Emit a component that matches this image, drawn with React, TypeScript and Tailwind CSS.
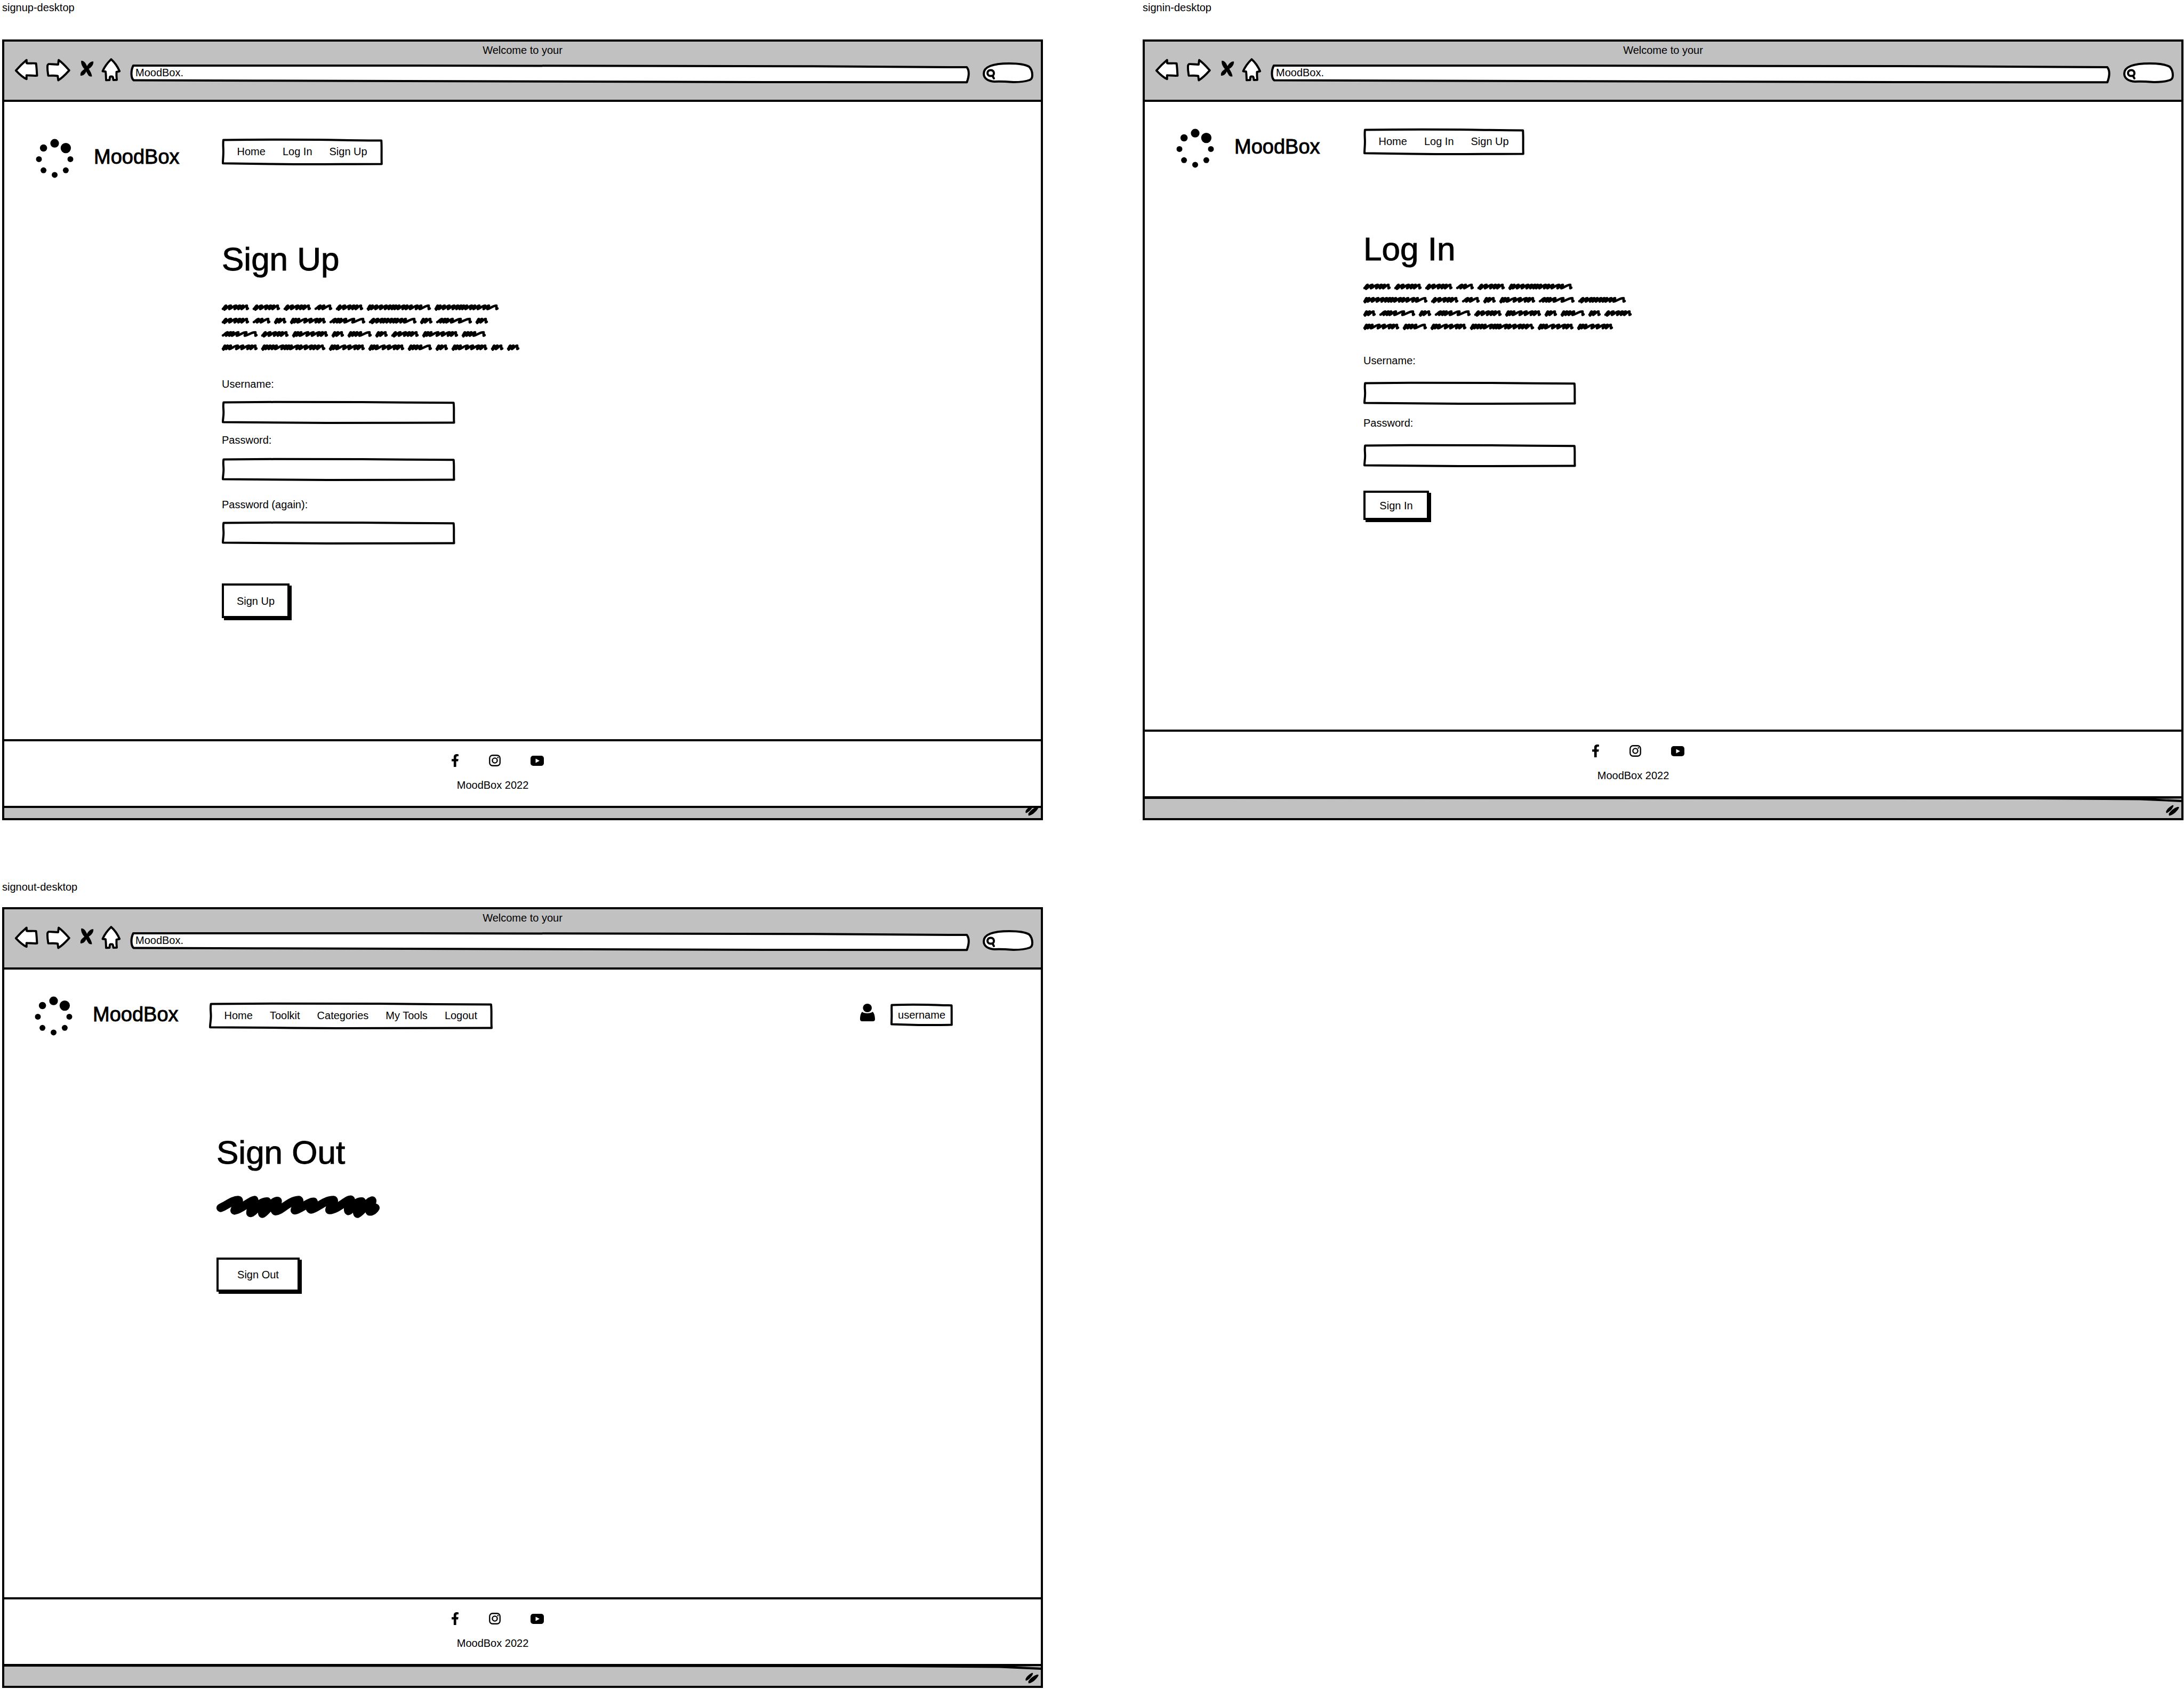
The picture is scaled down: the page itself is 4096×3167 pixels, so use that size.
import React from "react";
import { FaFacebookF } from "react-icons/fa";

/* ---------- Hand-drawn pieces ---------- */

function SketchFrame() {
  return (
    <svg
      aria-hidden="true"
      viewBox="0 0 100 100"
      preserveAspectRatio="none"
      className="pointer-events-none absolute inset-0.5 -z-10 h-[calc(100%-4px)] w-[calc(100%-4px)] overflow-visible"
    >
      <path
        d="M0.3 1 C20 -1 45 -1 60 0 S85 3 99.7 3 C100 30 99.7 65 99.9 99 C80 99 60 101 45 100 S12 97 0 96 C0 80 0.3 70 0.3 50 S0 20 0.3 1 Z"
        fill="#fff"
        stroke="#000"
        strokeWidth="4"
        strokeLinejoin="round"
        vectorEffect="non-scaling-stroke"
      />
    </svg>
  );
}

type WordShape = { width: number; peaks: number[] };

const WORDS: Record<string, WordShape> = {
  a: { width: 51, peaks: [8, 17, 27, 34, 40, 47] },
  b: { width: 33, peaks: [11, 18, 29] },
  c: { width: 120, peaks: [6, 11, 19, 28, 37, 44, 50, 55, 61, 70, 76, 84, 95, 102, 116] },
  d: { width: 23, peaks: [6, 12, 19] },
  e: { width: 67, peaks: [6, 11, 17, 30, 40, 51, 57, 63] },
  f: { width: 67, peaks: [11, 17, 22, 31, 46, 63] },
  g: { width: 89, peaks: [9, 17, 25, 30, 36, 43, 49, 54, 62, 69, 85] },
  h: { width: 45, peaks: [6, 12, 18, 25, 41] },
  i: { width: 120, peaks: [6, 11, 17, 23, 29, 41, 47, 52, 57, 69, 75, 85, 95, 101, 108, 115] },
};

function wordPath({ width, peaks }: WordShape) {
  let x = 2;
  let d = "M2 9";
  peaks.forEach((p, i) => {
    const dense = p - x < 8;
    d += ` C${x + (p - x) * 0.4} 8 ${p - (p - x) * 0.4} 3 ${p} 3`;
    x = p - 3;
    const y = dense ? 10.5 : 9.5;
    if (i < peaks.length - 1) d += ` C${p + 1} 5 ${x - 1} 8 ${x} ${y}`;
  });
  return `${d} L${width - 4} 9.5 L${width - 2} 8.5`;
}

function Scribble({ lines }: { lines: string[] }) {
  return (
    <div role="img" aria-label="Placeholder text">
      {lines.map((line, i) => (
        <div key={i} className="flex h-[25px] items-center gap-[7px]">
          {line.split("").map((w, j) => (
            <svg key={j} width={WORDS[w].width} height="13" className="shrink-0 overflow-visible">
              <path
                d={wordPath(WORDS[w])}
                fill="none"
                stroke="#000"
                strokeWidth="4.6"
                strokeLinecap="round"
                strokeLinejoin="round"
              />
            </svg>
          ))}
        </div>
      ))}
    </div>
  );
}

function BigScribble() {
  return (
    <svg role="img" aria-label="Placeholder text" viewBox="105 528 1163 163" className="h-[43px] w-[306px]">
      <path
        d="M135 618 C175 602 225 560 262 563 C272 570 240 615 234 637 C280 632 345 565 374 563 C380 580 345 620 347 655 C380 650 400 575 465 573 C470 590 420 620 432 660 C470 640 500 570 541 569 C545 590 505 620 525 642 C570 640 620 565 692 563 C705 575 665 610 663 636 C700 632 760 575 797 575 C805 590 755 610 778 630 C820 625 870 563 940 563 C950 575 910 610 910 634 C970 630 1030 560 1062 560 C1065 580 1035 620 1045 640 C1070 630 1090 573 1140 573 C1145 590 1095 620 1110 660 C1150 640 1180 575 1215 566 C1220 590 1180 620 1197 644 C1215 645 1232 630 1238 618"
        fill="none"
        stroke="#000"
        strokeWidth="60"
        strokeLinecap="round"
        strokeLinejoin="round"
      />
    </svg>
  );
}

function Spinner() {
  return (
    <svg role="img" aria-label="MoodBox logo" viewBox="254 744 272 281" className="h-[74px] w-[71px] shrink-0">
      <circle cx="390" cy="776" r="31" />
      <circle cx="470" cy="810" r="37" />
      <circle cx="503" cy="890" r="21" />
      <circle cx="470" cy="970" r="21" />
      <circle cx="390" cy="1003" r="21" />
      <circle cx="310" cy="970" r="21" />
      <circle cx="277" cy="890" r="21" />
      <circle cx="310" cy="810" r="26" />
    </svg>
  );
}

const outline = { fill: "#fff", stroke: "#000", strokeWidth: 15, strokeLinejoin: "round" as const };

function BrowserBar({ id }: { id: string }) {
  return (
    <header className="border-b-4 border-black bg-[#c1c1c1] px-3.5 pt-1 pb-[31px]">
      <p className="text-center">Welcome to your</p>
      <div className="mt-0.5 flex h-12 items-start gap-3 pl-1">
        <button type="button" aria-label="Back" className="shrink-0">
          <svg viewBox="100 170 178 175" className="h-[46px] w-[47px]">
            <path {...outline} d="M114 262 C140 232 160 212 190 187 L191 210 C215 213 240 208 258 212 C262 240 263 270 265 299 C240 301 215 297 190 296 L190 323 C160 310 138 287 114 262 Z" />
          </svg>
        </button>
        <button type="button" aria-label="Forward" className="shrink-0">
          <svg viewBox="322 170 184 175" className="h-[46px] w-12">
            <path {...outline} d="M494 261 C470 234 450 210 418 187 L414 219 C390 220 365 214 345 216 C333 222 338 240 338 260 C340 275 341 285 343 299 C365 300 390 296 411 301 L415 332 C445 315 470 288 494 261 Z" />
          </svg>
        </button>
        <button type="button" aria-label="Stop" className="ml-1 shrink-0">
          <svg viewBox="570 170 107 175" className="h-[46px] w-7">
            <path d="M583 192 C602 192 616 210 624 232 C640 255 657 278 660 304 C648 308 636 303 630 290 L612 258 C592 240 578 215 583 192 Z" />
            <path d="M670 198 C652 194 634 212 622 234 C612 250 596 258 586 268 C576 278 577 288 577 299 C594 302 612 288 618 270 L634 252 C656 240 672 220 670 198 Z" />
          </svg>
        </button>
        <button type="button" aria-label="Home" className="shrink-0">
          <svg viewBox="718 170 148 175" className="h-[46px] w-[39px]">
            <path {...outline} d="M792 182 C815 202 838 235 852 267 L830 272 C829 292 830 312 832 329 L808 330 C804 318 808 306 799 305 H787 C778 306 784 320 780 330 L756 331 C755 310 755 290 752 270 L731 267 C745 235 768 205 792 182 Z" />
          </svg>
        </button>
        <div className="relative isolate ml-1 h-[35px] min-w-0 flex-1 self-end">
          <svg aria-hidden="true" viewBox="0 0 100 100" preserveAspectRatio="none" className="pointer-events-none absolute inset-0.5 -z-10 h-[calc(100%-4px)] w-[calc(100%-4px)] overflow-visible">
            <path
              d="M0.25 0 C25 -1 60 0 80 4 L99.7 10 C100 30 100 60 99.7 101 C70 101 35 95 15 91 L0.3 89 C-0.05 75 -0.05 30 0.25 0 Z"
              fill="#fff"
              stroke="#000"
              strokeWidth="4"
              strokeLinejoin="round"
              vectorEffect="non-scaling-stroke"
            />
          </svg>
          <input aria-label="Address" id={`${id}-address`} defaultValue="MoodBox." className="h-full w-full bg-transparent px-2.5 pb-[5px] outline-none" />
        </div>
        <div className="relative isolate ml-[11px] h-[39px] w-[95px] shrink-0 self-end">
          <svg aria-hidden="true" viewBox="0 0 95 39" className="absolute inset-0 -z-10 h-full w-full">
            <path
              d="M2 21 C2 8 20 2 50 2 C68 2 80 4 87 8 C91 12 93 18 93 24 C93 30 91 32 88 33 C80 36 70 37 58 37 C45 36 32 35 22 36 C10 35 2 30 2 21 Z"
              fill="#fff"
              stroke="#000"
              strokeWidth="4"
            />
            <path d="M15 14.5 C19 14.5 21 17 21 20 C21 24 20 25.5 15 25.5 C11 25.5 9 23 9 20 C9 17 11 14.5 15 14.5 Z M18.5 25.5 L21 30" fill="none" stroke="#000" strokeWidth="4" strokeLinecap="round" />
          </svg>
          <input type="search" aria-label="Search" id={`${id}-search`} className="h-full w-full bg-transparent pr-2 pl-7 outline-none" />
        </div>
      </div>
    </header>
  );
}

function NavBox({ items }: { items: string[] }) {
  return (
    <nav className="relative isolate flex h-[50px] items-center gap-8 px-[29px] pb-0.5 whitespace-nowrap">
      <SketchFrame />
      {items.map((item) => (
        <a key={item} href="#">
          {item}
        </a>
      ))}
    </nav>
  );
}

function Brand() {
  return (
    <>
      <Spinner />
      <span className="ml-[38px] self-center pb-1.5 text-[38px] leading-10 [-webkit-text-stroke:1px_#000]">MoodBox</span>
    </>
  );
}

function PageFooter() {
  return (
    <footer className="flex flex-col items-center border-y-4 border-black bg-white pt-6 pr-[112px] pb-[27px]">
      <div className="ml-[18px] flex h-6 items-center gap-14">
        <a href="#" aria-label="Facebook">
          <FaFacebookF className="h-6 w-[15px]" preserveAspectRatio="none" />
        </a>
        <a href="#" aria-label="Instagram">
          <svg viewBox="0 0 22 22" className="h-[22px] w-[22px]" fill="none" stroke="#000">
            <rect x="1.25" y="1.25" width="19.5" height="19.5" rx="5.5" strokeWidth="2.3" />
            <circle cx="11" cy="11" r="4.6" strokeWidth="2.3" />
            <circle cx="16.8" cy="5.4" r="1.3" fill="#000" stroke="none" />
          </svg>
        </a>
        <a href="#" aria-label="YouTube">
          <svg viewBox="0 0 25 19" className="h-[19px] w-[25px]">
            <rect width="25" height="19" rx="5" />
            <path d="M9.5 5.5 L17 9.5 L9.5 13.5 Z" fill="#fff" />
          </svg>
        </a>
      </div>
      <p className="mt-[22px]">MoodBox 2022</p>
    </footer>
  );
}

function StatusBar({ tall = false }: { tall?: boolean }) {
  return (
    <div className={`relative flex items-end justify-end overflow-hidden bg-[#c1c1c1] pr-1 pb-1 ${tall ? "h-[37px]" : "h-[19px]"}`}>
      {tall && (
        <svg aria-hidden="true" viewBox="0 0 1000 8" preserveAspectRatio="none" className="absolute inset-x-0 top-0 h-2 w-full">
          <path d="M0 0 H1000 V7 L960 3.5 L850 2 L0 1 Z" />
          <path d="M975 0.8 L1000 0.5 V2.5 Z" fill="#fff" />
        </svg>
      )}
      <svg role="img" aria-label="Resize" viewBox="422 569 96 79" className="h-[21px] w-[25px] shrink-0">
        <path d="M470 571 C476 570 478 574 476 580 C470 596 448 622 427 628 C423 626 423 620 424 614 C432 596 452 580 470 571 Z" />
        <path d="M502 585 C510 583 516 584 517 588 C510 606 478 642 447 647 C443 645 443 638 444 631 C458 610 480 592 502 585 Z" />
      </svg>
    </div>
  );
}

function BrowserWindow({ id, tall, children }: { id: string; tall?: boolean; children: React.ReactNode }) {
  return (
    <article className="flex aspect-[4/3] flex-col border-4 border-black bg-white">
      <BrowserBar id={id} />
      <div className="flex-1">{children}</div>
      <PageFooter />
      <StatusBar tall={tall} />
    </article>
  );
}

function Field({ id, label, type = "text", className, inputClass }: { id: string; label: string; type?: string; className?: string; inputClass: string }) {
  return (
    <div className={`flex flex-col ${className ?? ""}`}>
      <label htmlFor={id}>{label}</label>
      <div className={`relative isolate h-[43px] ${inputClass}`}>
        <SketchFrame />
        <input id={id} type={type} className="h-full w-full bg-transparent px-3 outline-none" />
      </div>
    </div>
  );
}

function ActionButton({ children, className }: { children: React.ReactNode; className: string }) {
  return (
    <button type="button" className={`block border-4 border-black bg-white shadow-[4px_4px_0_0_#000] ${className}`}>
      {children}
    </button>
  );
}

function Title({ children }: { children: React.ReactNode }) {
  return <h1 className="text-[62px] leading-[72px] [-webkit-text-stroke:1px_#000]">{children}</h1>;
}

/* ---------- Screens ---------- */

function SignUpScreen() {
  return (
    <BrowserWindow id="signup">
      <div className="flex items-start pt-[69px] pl-[59px]">
        <Brand />
        <div className="ml-[79px]">
          <NavBox items={["Home", "Log In", "Sign Up"]} />
        </div>
      </div>
      <main className="pt-[116px] pl-[408px]">
        <Title>Sign Up</Title>
        <div className="mt-[42px]">
          <Scribble lines={["aaabacc", "abdefgdfd", "faedhdaeh", "eieehdedd"]} />
        </div>
        <form className="mt-11">
          <Field id="signup-user" label="Username:" inputClass="mt-5 w-[438px]" />
          <Field id="signup-pass" label="Password:" type="password" className="mt-[18px]" inputClass="mt-[22px] w-[438px]" />
          <Field id="signup-again" label="Password (again):" type="password" className="mt-8" inputClass="mt-5 w-[438px]" />
          <ActionButton className="mt-[73px] h-[65px] w-[127px]">Sign Up</ActionButton>
        </form>
      </main>
    </BrowserWindow>
  );
}

function SignInScreen() {
  return (
    <BrowserWindow id="signin" tall>
      <div className="flex items-start pt-[50px] pl-[59px]">
        <Brand />
        <div className="ml-[81px]">
          <NavBox items={["Home", "Log In", "Sign Up"]} />
        </div>
      </div>
      <main className="pt-[116px] pl-[410px]">
        <Title>Log In</Title>
        <div className="mt-[22px]">
          <Scribble lines={["aaabac", "cabdefg", "dfdfaedhda", "eheiee"]} />
        </div>
        <form className="mt-[39px]">
          <Field id="signin-user" label="Username:" inputClass="mt-7 w-[399px]" />
          <Field id="signin-pass" label="Password:" type="password" className="mt-[22px]" inputClass="mt-7 w-[399px]" />
          <ActionButton className="mt-11 h-[55px] w-[123px]">Sign In</ActionButton>
        </form>
      </main>
    </BrowserWindow>
  );
}

function SignOutScreen() {
  return (
    <BrowserWindow id="signout" tall>
      <div className="flex items-start pt-[50px] pr-[165px] pl-[57px]">
        <Brand />
        <div className="mt-3 ml-[57px]">
          <NavBox items={["Home", "Toolkit", "Categories", "My Tools", "Logout"]} />
        </div>
        <div className="mt-3.5 ml-auto flex items-start gap-[29px]">
          <svg role="img" aria-label="User" viewBox="0 0 28 33" className="h-[33px] w-7">
            <ellipse cx="13.7" cy="8" rx="8.3" ry="8" />
            <path d="M4 15.3 C8 18.8 19 18.8 23.5 15.3 C26.5 17 28 24 28 29 Q28 33 24 33 H4 Q0 33 0 29 C0 24 1 18 4 15.3 Z" />
          </svg>
          <a href="#" className="relative isolate flex h-[42px] items-center px-3.5">
            <SketchFrame />
            username
          </a>
        </div>
      </div>
      <main className="pt-[183px] pl-[398px]">
        <Title>Sign Out</Title>
        <div className="mt-11">
          <BigScribble />
        </div>
        <ActionButton className="mt-[74px] h-16 w-[156px]">Sign Out</ActionButton>
      </main>
    </BrowserWindow>
  );
}

export default function App() {
  return (
    <div className="grid min-h-screen grid-cols-2 content-start gap-x-[187px] gap-y-[113px] bg-white pt-0.5 pr-px pl-1 font-['Liberation_Sans',sans-serif] text-[20px] leading-6 text-black">
      <section>
        <h2 className="mb-12">signup-desktop</h2>
        <SignUpScreen />
      </section>
      <section>
        <h2 className="mb-12">signin-desktop</h2>
        <SignInScreen />
      </section>
      <section>
        <h2 className="mb-[26px]">signout-desktop</h2>
        <SignOutScreen />
      </section>
    </div>
  );
}
